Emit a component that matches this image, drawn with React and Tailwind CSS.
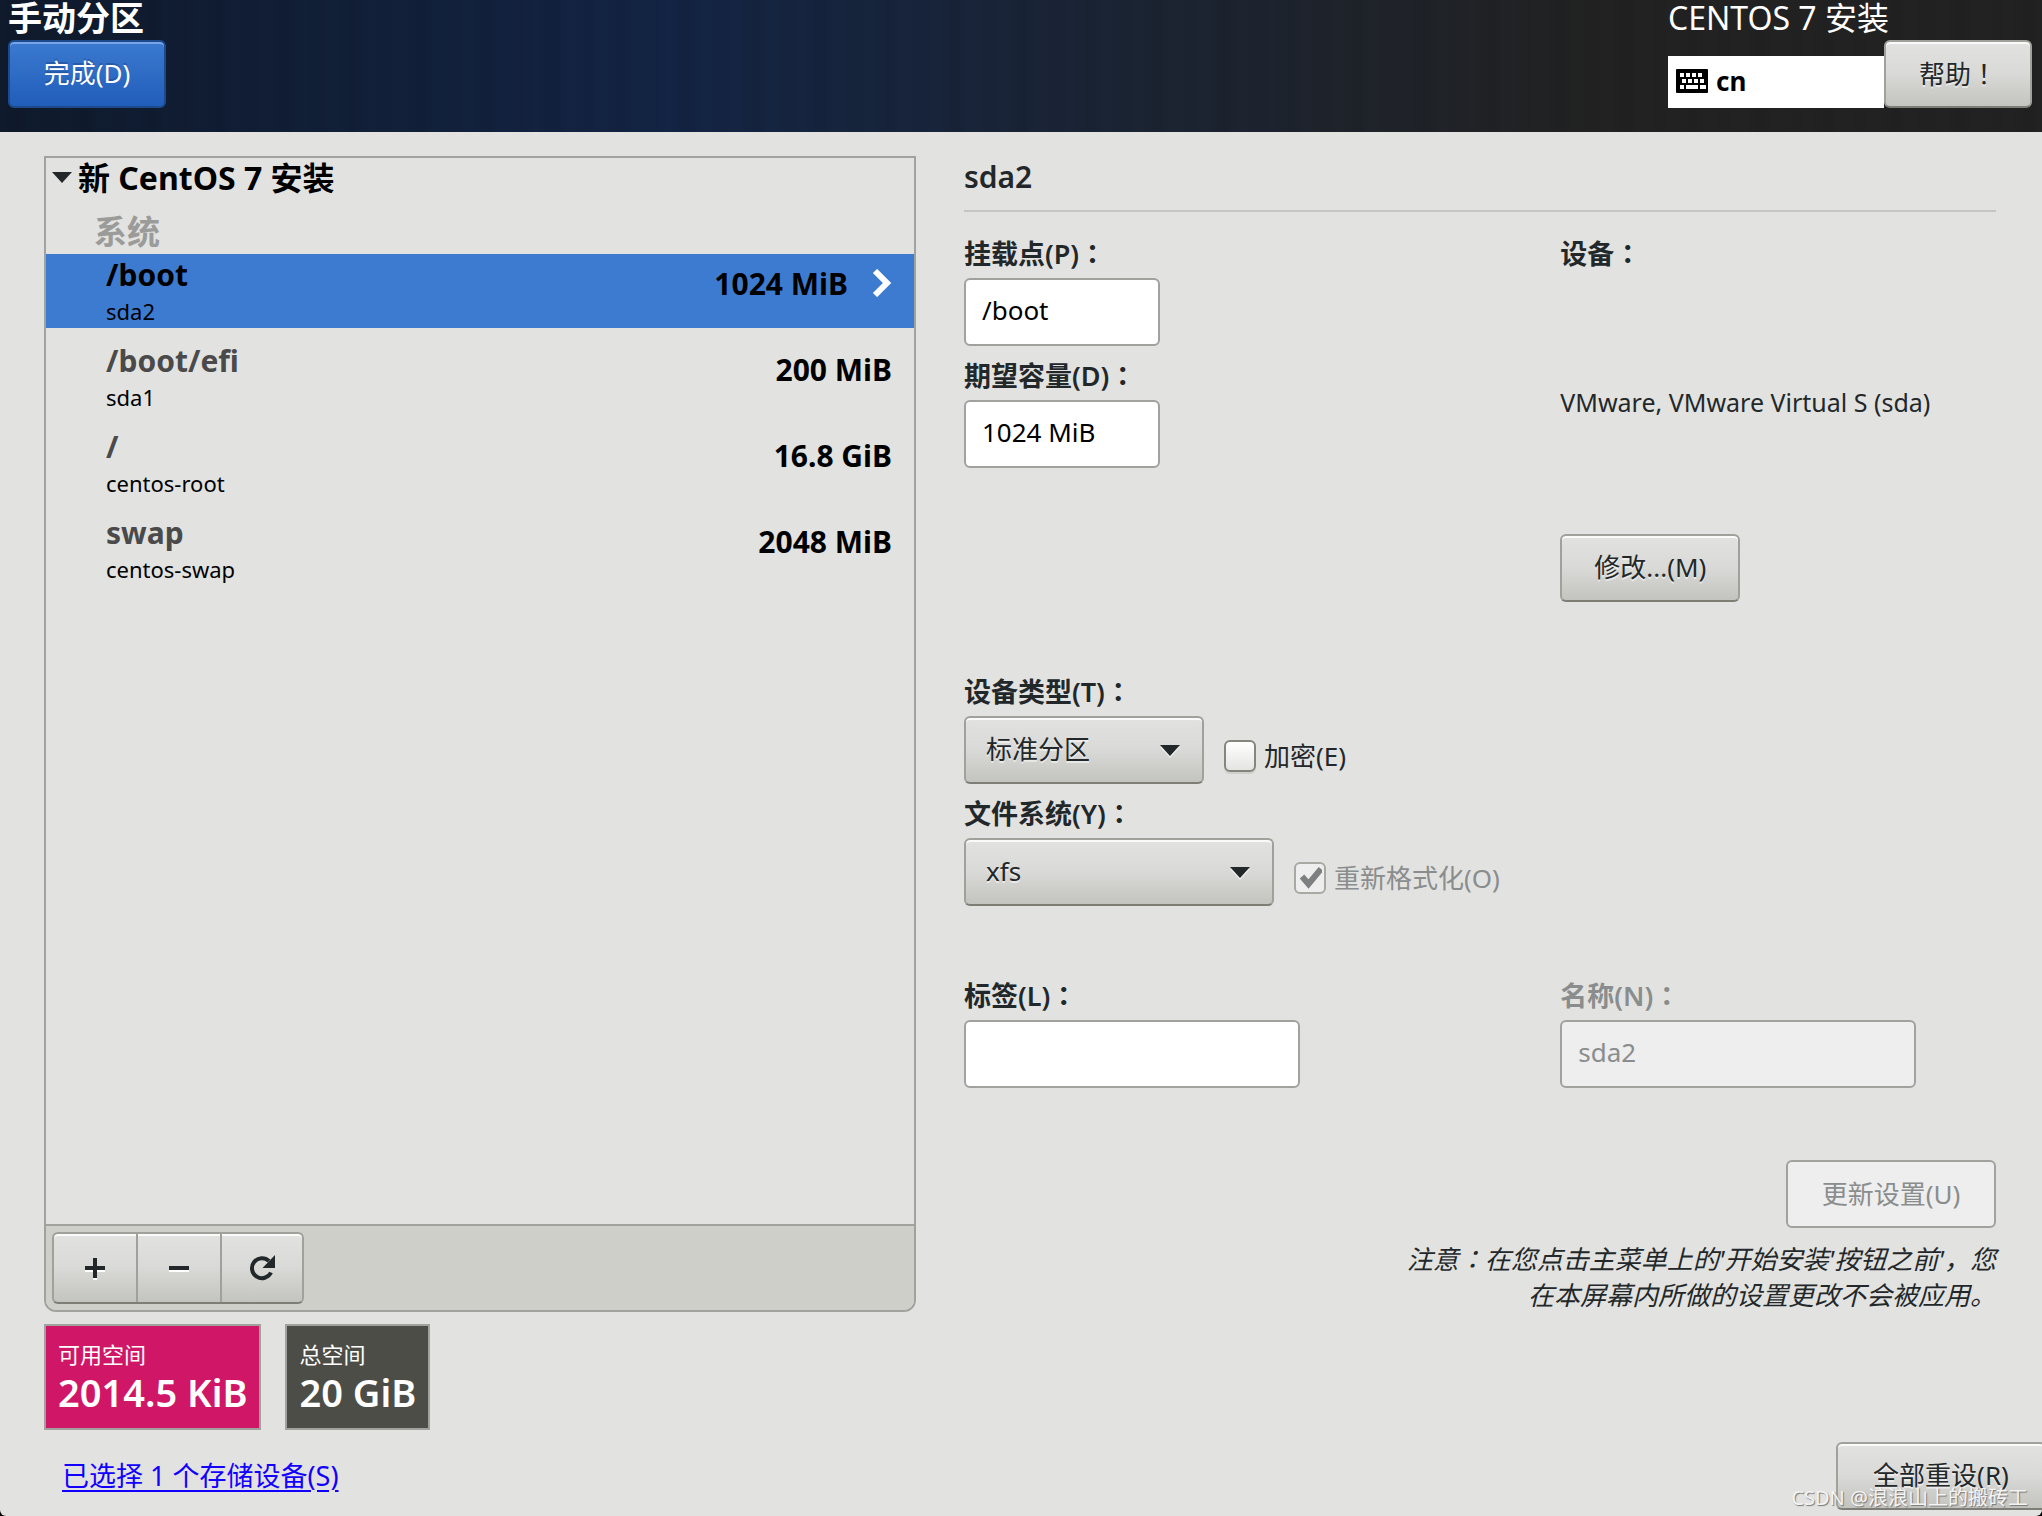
import { useState } from "react";

const partitions = [
  { mount: "/boot", device: "sda2", size: "1024 MiB" },
  { mount: "/boot/efi", device: "sda1", size: "200 MiB" },
  { mount: "/", device: "centos-root", size: "16.8 GiB" },
  { mount: "swap", device: "centos-swap", size: "2048 MiB" },
];

const raised =
  "border-2 border-[#a1a19b] border-b-[#7e7e77] bg-linear-to-b from-[#e2e2e0] via-[#d9d9d7] to-[#c3c3bf] text-[#22282a] shadow-[inset_0_2px_0_#fafaf9] [text-shadow:0_2px_0_#ffffff88]";

// full-width punctuation centred in its em box
const Mark = ({ children }) => (
  <span className="font-['Noto_Sans_CJK_TC',sans-serif]">{children}</span>
);

const Button = ({ className = "", children }) => (
  <button className={`h-17 rounded-md px-8 pb-0.5 whitespace-nowrap ${raised} ${className}`}>
    {children}
  </button>
);

const Field = ({ id, label, disabled, children }) => (
  <div className="flex flex-col items-start gap-1.5">
    <label
      htmlFor={id}
      className={`h-9 text-[27px] leading-8.5 font-semibold ${disabled ? "text-[#8a8d8d]" : "text-[#22282a]"}`}
    >
      {label}
      <Mark>：</Mark>
    </label>
    {children}
  </div>
);

const TextInput = ({ id, value, disabled, className }) => (
  <input
    id={id}
    type="text"
    defaultValue={value}
    disabled={disabled}
    className={`h-17 rounded-md border-2 border-[#a1a19e] bg-white px-4 pb-1 text-black disabled:bg-[#eeeeee] disabled:text-[#8a8d8d] ${className}`}
  />
);

const Select = ({ id, options, className }) => (
  <div className={`relative ${className}`}>
    <select id={id} className={`h-17 w-full appearance-none rounded-md px-5 pb-0.5 ${raised}`}>
      {options.map((o) => (
        <option key={o}>{o}</option>
      ))}
    </select>
    <svg className="pointer-events-none absolute top-7 right-6 h-3.5 w-5" viewBox="0 0 20 14">
      <path d="M0 3h20L10 14z" fill="#fff" opacity=".6" />
      <path d="M0 1h20L10 12z" fill="#22282a" />
    </svg>
  </div>
);

const Checkbox = ({ id, label, checked, disabled }) => (
  <div className={`flex items-center gap-2 pt-3 ${disabled ? "text-[#8a8d8d]" : "text-[#22282a]"}`}>
    <div className="relative h-8 w-8">
      <input
        id={id}
        type="checkbox"
        defaultChecked={checked}
        disabled={disabled}
        className="peer block h-8 w-8 appearance-none rounded-md border-2 border-[#85857c] bg-linear-to-b from-white to-[#e4e4e2] shadow-[0_2px_0_#cfcfcb] disabled:border-[#a9a9a4] disabled:from-[#eeeeee] disabled:to-[#eeeeee] disabled:shadow-none"
      />
      <svg
        className="pointer-events-none absolute top-1 left-1 hidden h-6 w-6 peer-checked:block"
        viewBox="0 0 24 24"
      >
        <path d="M4 10.500L10.500 18L23 3" fill="none" stroke="#7c8080" strokeWidth="6" />
      </svg>
    </div>
    <label htmlFor={id}>{label}</label>
  </div>
);

const KeyboardIcon = () => (
  <svg className="h-6 w-8" viewBox="0 0 32 24">
    <rect width="32" height="24" rx="1" fill="#000" />
    <g fill="#fff">
      <path d="M4 4h4v4H4zM10 4h4v4h-4zM16 4h4v4h-4zM22 4h4v4h-4z" />
      <path d="M6 10h4v4H6zM12 10h4v4h-4zM18 10h4v4h-4zM24 10h4v4h-4z" />
      <path d="M4 16h4v4H4zM10 16h12v4H10zM24 16h6v4h-6z" />
    </g>
  </svg>
);

const Header = () => (
  <header className="bg-linear-to-r from-[#0f1a2c] via-[#132444] via-33% to-[#222222] to-78%">
    <div className="flex h-33 justify-between bg-[repeating-linear-gradient(90deg,#00000000_0px,#00000012_19px,#00000000_31px,#00000008_53px,#00000000_67px)] pr-2.5 pl-2 text-white">
      <div className="flex flex-col items-start">
        <h1 className="h-10 text-[34px] leading-9 font-bold">手动分区</h1>
        <button className="h-17 w-39.5 rounded-md border-2 border-[#1c4a8c] bg-linear-to-b from-[#3b7ad0] to-[#215dba] pb-0.5 text-white shadow-[inset_0_2px_0_#76a6e6] [text-shadow:0_-2px_0_#1c4a8c88]">
          完成(D)
        </button>
      </div>
      <div className="flex flex-col">
        <h2 className="h-10 text-[32px] leading-9">CENTOS 7 安装</h2>
        <div className="flex items-end">
          <div className="flex h-13 w-54 items-center gap-2 bg-white px-2 pb-0.5 font-bold text-black">
            <KeyboardIcon />
            cn
          </div>
          <Button className="w-37">
            帮助<Mark>！</Mark>
          </Button>
        </div>
      </div>
    </div>
  </header>
);

const Partition = ({ mount, device, size, selected, onSelect }) => (
  <li>
    <button
      onClick={onSelect}
      className={`flex h-18.5 w-full justify-between pr-5.5 pl-15 text-left text-black ${selected ? "bg-[#3d7bd1]" : ""}`}
    >
      <span className="pt-px">
        <span
          className={`block text-[30px] leading-10 font-bold ${selected ? "text-black" : "text-[#4a4a4a]"}`}
        >
          {mount}
        </span>
        <span className="block text-[22px] leading-8">{device}</span>
      </span>
      <span className="flex items-center gap-6 pb-4 text-[30px] font-bold">
        {size}
        {selected && (
          <svg className="h-7 w-5" viewBox="0 0 20 28">
            <path d="M3 2L15 14L3 26" fill="none" stroke="#fff" strokeWidth="6" />
          </svg>
        )}
      </span>
    </button>
  </li>
);

const Space = ({ label, value, className }) => (
  <div className={`h-26.5 border-2 border-[#a1a19e] px-3 pt-2.5 text-white ${className}`}>
    <p className="text-[22px] leading-9">{label}</p>
    <p className="text-[38px] leading-10 font-semibold">{value}</p>
  </div>
);

const toolButton = "flex h-17 w-21 items-center justify-center last:w-20";

const PartitionList = () => {
  const [selected, setSelected] = useState("/boot");
  return (
    <section className="flex flex-col">
      <div className="flex grow flex-col overflow-hidden rounded-b-xl border-2 border-[#a1a19e]">
        <div className="grow">
          <h2 className="flex h-10 items-center gap-1.5 pl-1.5 text-[32px] font-bold text-black">
            <svg className="h-3 w-5" viewBox="0 0 20 12">
              <path d="M0 0h20L10 11z" fill="#22282a" />
            </svg>
            新 CentOS 7 安装
          </h2>
          <h3 className="mt-3.5 mb-0.5 h-10 pl-12 text-[33px] leading-10 font-bold text-[#9b9b99]">
            系统
          </h3>
          <ul className="flex flex-col gap-3">
            {partitions.map((p) => (
              <Partition
                key={p.mount}
                {...p}
                selected={selected === p.mount}
                onSelect={() => setSelected(p.mount)}
              />
            ))}
          </ul>
        </div>
        <div className="flex h-21.5 items-start border-t-2 border-[#a1a19e] bg-[#cfcfca] p-1.5">
          <div className={`flex divide-x-2 divide-[#a1a19b] rounded-md ${raised}`}>
            <button aria-label="添加" className={toolButton}>
              <svg className="h-6 w-6" viewBox="0 0 24 24">
                <path d="M2 14h20M12 4v20" stroke="#fff" strokeWidth="4" />
                <path d="M2 12h20M12 2v20" stroke="#22282a" strokeWidth="4" />
              </svg>
            </button>
            <button aria-label="删除" className={toolButton}>
              <svg className="h-6 w-6" viewBox="0 0 24 24">
                <path d="M2 14h20" stroke="#fff" strokeWidth="4" />
                <path d="M2 12h20" stroke="#22282a" strokeWidth="4" />
              </svg>
            </button>
            <button aria-label="重新载入" className={toolButton}>
              <svg className="h-7 w-7" viewBox="0 0 28 28">
                <path d="M23 18.500A10 10 0 1 1 21 7" fill="none" stroke="#22282a" strokeWidth="4" />
                <path d="M27 1v13H14.500z" fill="#22282a" />
              </svg>
            </button>
          </div>
        </div>
      </div>
      <div className="mt-3 flex gap-6">
        <Space label="可用空间" value="2014.5 KiB" className="bg-[#d01767]" />
        <Space label="总空间" value="20 GiB" className="bg-[#4d4d47]" />
      </div>
    </section>
  );
};

const Details = () => (
  <section className="text-[#22282a]">
    <h2 className="h-14 border-b-2 border-[#c5c5c3] text-[30px] leading-10.5 font-semibold">sda2</h2>
    <div className="mt-6 flex flex-col gap-18">
      <div className="grid grid-cols-[26fr_19fr]">
        <div className="flex flex-col gap-3">
          <Field id="mount" label="挂载点(P)">
            <TextInput id="mount" value="/boot" className="w-49" />
          </Field>
          <Field id="size" label="期望容量(D)">
            <TextInput id="size" value="1024 MiB" className="w-49" />
          </Field>
        </div>
        <div className="flex flex-col items-start">
          <h3 className="h-9 text-[27px] leading-8.5 font-semibold">
            设备<Mark>：</Mark>
          </h3>
          <p className="flex h-65.5 items-center text-[25px]">VMware, VMware Virtual S (sda)</p>
          <Button>修改...(M)</Button>
        </div>
      </div>
      <div className="flex flex-col gap-3">
        <div className="flex items-end gap-5">
          <Field id="type" label="设备类型(T)">
            <Select id="type" options={["标准分区", "LVM", "LVM 简单配置"]} className="w-60" />
          </Field>
          <div className="flex h-17 items-center">
            <Checkbox id="encrypt" label="加密(E)" />
          </div>
        </div>
        <div className="flex items-end gap-5">
          <Field id="fs" label="文件系统(Y)">
            <Select id="fs" options={["xfs", "ext4", "ext3", "swap"]} className="w-77.5" />
          </Field>
          <div className="flex h-17 items-center">
            <Checkbox id="reformat" label="重新格式化(O)" checked disabled />
          </div>
        </div>
      </div>
      <div className="grid grid-cols-[26fr_19fr]">
        <Field id="label" label="标签(L)">
          <TextInput id="label" value="" className="w-84" />
        </Field>
        <Field id="name" label="名称(N)" disabled>
          <TextInput id="name" value="sda2" disabled className="w-89" />
        </Field>
      </div>
      <div className="flex flex-col items-end gap-3">
        <button
          disabled
          className="h-17 w-52.5 rounded-md border-2 border-[#a1a19e] bg-[#eeeeee] text-[#8a8d8d]"
        >
          更新设置(U)
        </button>
        <p className="max-w-152 text-right leading-9 italic">
          注意<Mark>：</Mark>在您点击主菜单上的'开始安装'按钮之前'，您
          <br />
          在本屏幕内所做的设置更改不会被应用。
        </p>
      </div>
    </div>
  </section>
);

export default function App() {
  return (
    <div className="bg-black">
      <div className="relative flex min-h-screen flex-col overflow-hidden rounded-b-md bg-[#e2e2e0] font-['Noto_Sans','Noto_Sans_CJK_SC',sans-serif] text-[26px]">
        <Header />
        <main className="grid grow grid-cols-[109fr_129fr] gap-12 pt-6 pr-11.5 pl-11">
          <PartitionList />
          <Details />
        </main>
        <footer className="mt-3 mb-1.5 flex items-center justify-between pl-15.5">
          <a
            href="#disks"
            className="text-[27px] text-[#1200ff] underline decoration-2 underline-offset-4"
          >
            已选择 1 个存储设备(S)
          </a>
          <Button className="-mr-1 w-52.5">全部重设(R)</Button>
        </footer>
        <p className="pointer-events-none absolute right-3.5 bottom-1 text-[20px] leading-7 text-[#f4f4f4] [text-shadow:1px_1px_1px_#777777]">
          CSDN @浪浪山上的搬砖工
        </p>
      </div>
    </div>
  );
}
